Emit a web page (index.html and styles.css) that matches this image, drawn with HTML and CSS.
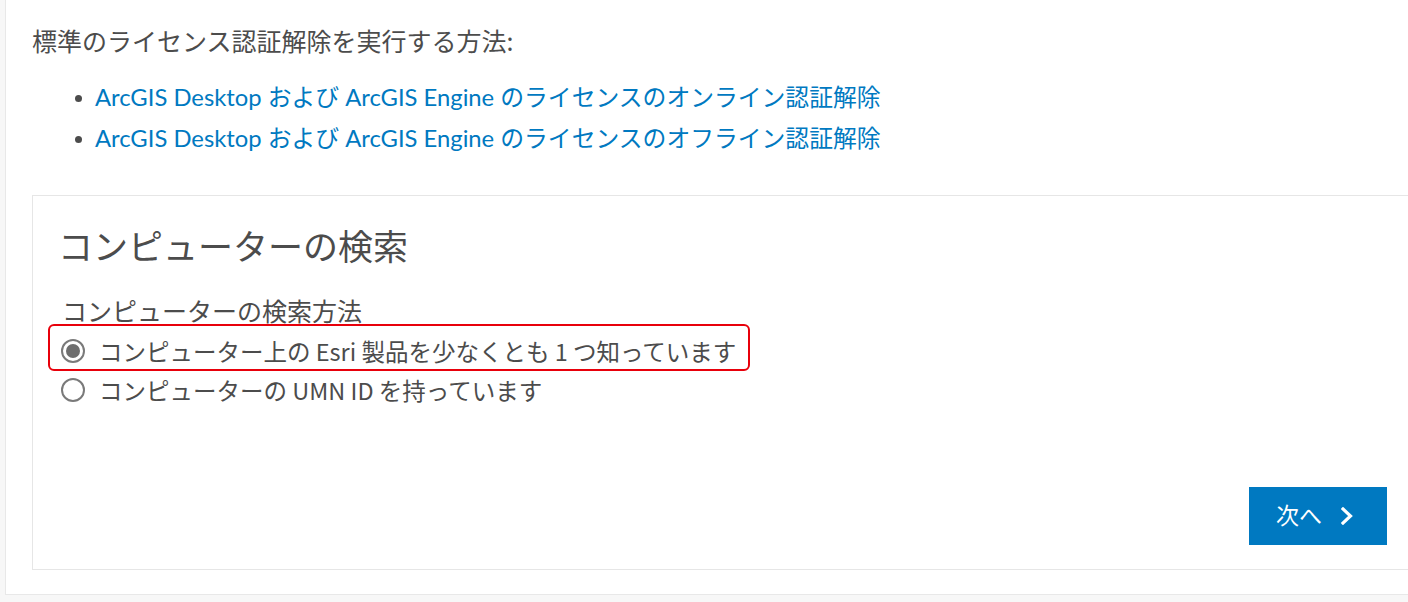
FILE: index.html
```html
<!DOCTYPE html>
<html lang="ja">
<head>
<meta charset="utf-8">
<title>コンピューターの検索</title>
<link rel="stylesheet" href="styles.css">
</head>
<body>
<div class="panel">
  <p class="intro">標準のライセンス認証解除を実行する方法:</p>
  <ul class="links">
    <li><a href="#">ArcGIS Desktop および ArcGIS Engine のライセンスのオンライン認証解除</a></li>
    <li><a href="#">ArcGIS Desktop および ArcGIS Engine のライセンスのオフライン認証解除</a></li>
  </ul>
  <section class="card">
    <h2 class="card-title">コンピューターの検索</h2>
    <div class="group">
      <div class="group-label">コンピューターの検索方法</div>
      <div class="options">
        <label class="option"><span class="radio checked"></span><span class="option-text">コンピューター上の Esri 製品を少なくとも 1 つ知っています</span></label>
        <label class="option"><span class="radio"></span><span class="option-text">コンピューターの UMN ID を持っています</span></label>
      </div>
      <div class="highlight"></div>
    </div>
    <div class="actions">
      <button class="next" type="button">次へ<svg class="chev" width="12" height="18" viewBox="0 0 12 18"><polyline points="2,2 9.5,9 2,16" fill="none" stroke="#fff" stroke-width="3.2" stroke-linecap="square" stroke-linejoin="miter"/></svg></button>
    </div>
  </section>
</div>
</body>
</html>
```

FILE: styles.css
```css
html, body {
  margin: 0;
  padding: 0;
}
body {
  background: #f7f7f7;
  overflow: hidden;
  height: 602px;
  font-family: "Lato", "Noto Sans CJK JP", sans-serif;
  color: #4c4c4c;
}
.panel {
  box-sizing: border-box;
  margin-left: 5px;
  width: 1438px;
  height: 595px;
  background: #fff;
  border: 1px solid #e8e8e8;
  border-top: none;
  padding: 22px 26px 0 26px;
}
.intro {
  margin: 0;
  font-family: "Noto Sans CJK JP", sans-serif;
  font-size: 25px;
  line-height: 36px;
}
.links {
  list-style: none;
  margin: 19px 0 0 0;
  padding: 0 0 0 63px;
}
.links li {
  position: relative;
  font-size: 23.8px;
  line-height: 41px;
}
.links li::before {
  content: "";
  position: absolute;
  left: -20px;
  top: 18px;
  width: 7px;
  height: 7px;
  border-radius: 50%;
  background: #4c4c4c;
}
.links a {
  color: #0079c1;
  text-decoration: none;
}
.card {
  box-sizing: border-box;
  margin-top: 36px;
  width: 1383px;
  height: 375px;
  border: 1px solid #e6e6e6;
  padding: 24px 27px 24px 25px;
  display: flex;
  flex-direction: column;
}
.card-title {
  margin: 0;
  font-weight: normal;
  font-family: "Noto Sans CJK JP", sans-serif;
  font-size: 35px;
  line-height: 50px;
}
.group {
  position: relative;
  margin-top: 23px;
  padding-left: 2px;
}
.group-label {
  font-family: "Noto Sans CJK JP", sans-serif;
  font-size: 25px;
  line-height: 34px;
  padding-left: 2px;
}
.options {
  margin-top: 4px;
}
.option {
  display: flex;
  align-items: center;
  gap: 14px;
  height: 39px;
  font-family: "Noto Sans CJK JP", sans-serif;
  font-size: 23.5px;
}
.radio {
  box-sizing: border-box;
  flex: none;
  width: 24px;
  height: 24px;
  margin-left: 1px;
  border: 2px solid #7a7a7a;
  border-radius: 50%;
  display: flex;
  align-items: center;
  justify-content: center;
  background: #fff;
}
.radio.checked::after {
  content: "";
  width: 14px;
  height: 14px;
  border-radius: 50%;
  background: #6e6e6e;
}
.highlight {
  position: absolute;
  left: -10px;
  top: 31px;
  width: 702px;
  height: 47px;
  box-sizing: border-box;
  border: 2px solid #e8000b;
  border-radius: 6px;
  pointer-events: none;
}
.actions {
  margin-top: auto;
  display: flex;
  justify-content: flex-end;
}
.next {
  box-sizing: border-box;
  width: 138px;
  height: 58px;
  border: none;
  background: #0079c1;
  color: #fff;
  font-family: "Noto Sans CJK JP", sans-serif;
  font-size: 23px;
  display: flex;
  align-items: center;
  padding: 0 0 4px 27px;
  gap: 19px;
  cursor: pointer;
}
.chev {
  display: block;
  margin-top: 4px;
}
```
